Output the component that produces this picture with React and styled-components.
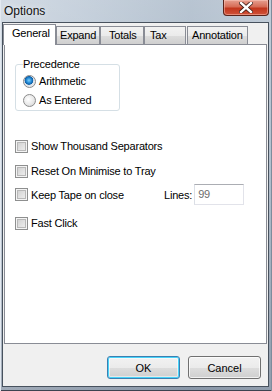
import React from "react";
import styled, { createGlobalStyle } from "styled-components";

const GlobalStyle = createGlobalStyle`
  html, body {
    margin: 0;
    padding: 0;
    background: #ffffff;
  }
  body {
    font-family: "Liberation Sans", Arial, sans-serif;
  }
`;

const uiFont = `"Liberation Sans", Arial, sans-serif`;

const Window = styled.div`
  width: 272px;
  height: 391px;
  box-sizing: border-box;
  display: flex;
  flex-direction: column;
  padding: 0 3px 4px 2px;
  background: linear-gradient(
      180deg,
      rgba(255, 255, 255, 0.18) 0%,
      rgba(255, 255, 255, 0) 40%,
      rgba(40, 50, 70, 0.25) 100%
    ),
    linear-gradient(90deg, #c9d3de 0%, #b9c6d4 35%, #a9b8c8 70%, #b4c1cf 100%);
  box-shadow: inset 1px 0 0 #e3e9f0, inset -1px 0 0 #7d8c9c,
    inset 0 -1px 0 #3d4350;
`;

const TitleBar = styled.div`
  height: 22px;
  display: flex;
  align-items: flex-start;
  justify-content: space-between;
`;

const Title = styled.div`
  font-family: ${uiFont};
  font-size: 12px;
  line-height: 14px;
  color: #111;
  padding: 4px 0 0 2px;
  text-shadow: 0 0 6px rgba(255, 255, 255, 0.9);
`;

const CloseButton = styled.div`
  width: 46px;
  height: 16px;
  box-sizing: border-box;
  margin-right: 0;
  border: 1px solid #5a231a;
  border-top: none;
  border-radius: 0 0 4px 4px;
  background: linear-gradient(
    180deg,
    #e6a090 0%,
    #d66c56 45%,
    #c2361c 55%,
    #d0523a 100%
  );
  box-shadow: inset 0 0 0 1px rgba(255, 210, 200, 0.45);
  display: flex;
  justify-content: center;
  align-items: flex-start;
  padding-top: 2px;
`;

const Client = styled.div`
  flex: 1;
  display: flex;
  flex-direction: column;
  border: 1px solid #48525e;
  background: #f0f0f0;
`;

const TabStrip = styled.div`
  height: 21px;
  display: flex;
  align-items: flex-end;
`;

const Tab = styled.div`
  width: ${(p) => p.$w}px;
  height: ${(p) => (p.$active ? 21 : 18)}px;
  box-sizing: border-box;
  margin-left: ${(p) => p.$ml || 0}px;
  margin-bottom: ${(p) => (p.$active ? -1 : 0)}px;
  position: relative;
  z-index: ${(p) => (p.$active ? 1 : 0)};
  border: 1px solid #898c95;
  border-bottom: none;
  background: ${(p) =>
    p.$active
      ? "#ffffff"
      : "linear-gradient(180deg, #f2f2f2 0%, #ebebeb 50%, #dddddd 51%, #cfcfcf 100%)"};
  font-family: ${uiFont};
  font-size: 11px;
  letter-spacing: -0.2px;
  color: #000;
  padding-left: ${(p) => p.$pl}px;
  line-height: ${(p) => (p.$active ? 17 : 16)}px;
`;

const Panel = styled.div`
  height: 300px;
  box-sizing: border-box;
  margin: 0 1px;
  border: 1px solid #898c95;
  background: #ffffff;
  display: flex;
  flex-direction: column;
  padding-left: 10px;
  font-family: ${uiFont};
  font-size: 11px;
  letter-spacing: -0.2px;
  color: #000;
`;

const GroupBox = styled.fieldset`
  width: 105px;
  box-sizing: border-box;
  margin: 13px 0 0 0;
  padding: 3px 7px 3px 7px;
  border: 1px solid #d5dfe5;
  border-radius: 3px;
  display: flex;
  flex-direction: column;
  gap: 6px;
`;

const Legend = styled.legend`
  padding: 0;
  font-size: 11px;
  line-height: 13px;
  color: #000;
`;

const OptionRow = styled.div`
  display: flex;
  align-items: center;
  gap: 3px;
  height: 13px;
  line-height: 13px;
  margin-top: ${(p) => p.$mt || 0}px;
`;

const Radio = styled.span`
  width: 13px;
  height: 13px;
  box-sizing: border-box;
  border-radius: 50%;
  border: 1px solid #8b8b8b;
  background: ${(p) =>
    p.$checked
      ? "radial-gradient(circle at 45% 40%, #7ed0fb 0%, #2d93dc 25%, #0b5fa8 45%, #dfe3e8 52%, #f4f4f4 100%)"
      : "radial-gradient(circle at 40% 40%, #ffffff 0%, #e8e8e8 55%, #cfcfcf 100%)"};
  flex-shrink: 0;
`;

const Check = styled.span`
  width: 13px;
  height: 13px;
  box-sizing: border-box;
  border: 1px solid #8e8f8f;
  background: linear-gradient(135deg, #cbcbcb 0%, #e4e4e4 60%, #f2f2f2 100%);
  box-shadow: inset 0 0 0 1px #f4f4f4, inset 0 0 0 2px #b8b8b8;
  flex-shrink: 0;
`;

const CheckLabel = styled.span`
  width: ${(p) => (p.$w ? `${p.$w}px` : "auto")};
  white-space: nowrap;
`;

const FieldRow = styled.div`
  display: flex;
  align-items: center;
  height: 21px;
  margin-top: ${(p) => p.$mt || 0}px;
`;

const CheckGroup = styled.div`
  display: flex;
  align-items: center;
  gap: 3px;
  width: 149px;
`;

const LinesInput = styled.div`
  width: 50px;
  height: 21px;
  box-sizing: border-box;
  margin-left: 2px;
  border: 1px solid #e2e3ea;
  border-top-color: #abadb3;
  border-left-color: #dbdfe6;
  background: #fff;
  color: #6d6d6d;
  padding-left: 3px;
  line-height: 18px;
`;

const Footer = styled.div`
  display: flex;
  justify-content: flex-end;
  gap: 8px;
  padding: 12px 7px 0 0;
`;

const Button = styled.div`
  width: 73px;
  height: 23px;
  box-sizing: border-box;
  border: 1px solid ${(p) => (p.$default ? "#3c7fb1" : "#707070")};
  border-radius: 3px;
  background: linear-gradient(
    180deg,
    #f2f2f2 0%,
    #ebebeb 50%,
    #dddddd 51%,
    #cfcfcf 100%
  );
  box-shadow: ${(p) =>
    p.$default
      ? "inset 0 0 0 1px #48d3f9, inset 0 0 0 2px rgba(255,255,255,0.5)"
      : "inset 0 0 0 1px rgba(255,255,255,0.7)"};
  display: flex;
  align-items: center;
  justify-content: center;
  font-family: ${uiFont};
  font-size: 11px;
  color: #000;
`;

function CloseGlyph() {
  return (
    <svg width="14" height="11" viewBox="0 0 14 11">
      <path
        d="M2 1 L12 10 M12 1 L2 10"
        stroke="#3b1a14"
        strokeWidth="4"
        strokeLinecap="square"
      />
      <path
        d="M2 1 L12 10 M12 1 L2 10"
        stroke="#ffffff"
        strokeWidth="2.4"
        strokeLinecap="square"
      />
    </svg>
  );
}

const tabs = [
  { label: "General", w: 53, pl: 8, active: true },
  { label: "Expand", w: 44, pl: 3 },
  { label: "Totals", w: 44, pl: 8 },
  { label: "Tax", w: 42, pl: 5, ml: 0 },
  { label: "Annotation", w: 61, pl: 4, ml: 1 },
];

export default function App() {
  return (
    <>
      <GlobalStyle />
      <Window>
        <TitleBar>
          <Title>Options</Title>
          <CloseButton>
            <CloseGlyph />
          </CloseButton>
        </TitleBar>
        <Client>
          <TabStrip>
            {tabs.map((t) => (
              <Tab
                key={t.label}
                $w={t.w}
                $pl={t.pl}
                $ml={t.ml}
                $active={t.active}
              >
                {t.label}
              </Tab>
            ))}
          </TabStrip>
          <Panel>
            <GroupBox>
              <Legend>Precedence</Legend>
              <OptionRow $mt={1}>
                <Radio $checked />
                <span>Arithmetic</span>
              </OptionRow>
              <OptionRow>
                <Radio />
                <span>As Entered</span>
              </OptionRow>
            </GroupBox>
            <OptionRow $mt={29}>
              <Check />
              <CheckLabel>Show Thousand Separators</CheckLabel>
            </OptionRow>
            <OptionRow $mt={12}>
              <Check />
              <CheckLabel>Reset On Minimise to Tray</CheckLabel>
            </OptionRow>
            <FieldRow $mt={6}>
              <CheckGroup>
                <Check />
                <CheckLabel>Keep Tape on close</CheckLabel>
              </CheckGroup>
              <span>Lines:</span>
              <LinesInput>99</LinesInput>
            </FieldRow>
            <OptionRow $mt={12}>
              <Check />
              <CheckLabel>Fast Click</CheckLabel>
            </OptionRow>
          </Panel>
          <Footer>
            <Button $default>OK</Button>
            <Button>Cancel</Button>
          </Footer>
        </Client>
      </Window>
    </>
  );
}
